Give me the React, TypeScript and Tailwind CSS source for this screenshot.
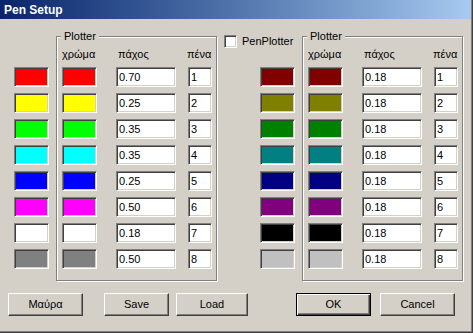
const leftPens = [
  { bg: 'bg-[#ff0000]', w: '0.70' },
  { bg: 'bg-[#ffff00]', w: '0.25' },
  { bg: 'bg-[#00ff00]', w: '0.35' },
  { bg: 'bg-[#00ffff]', w: '0.35' },
  { bg: 'bg-[#0000ff]', w: '0.25' },
  { bg: 'bg-[#ff00ff]', w: '0.50' },
  { bg: 'bg-[#ffffff]', w: '0.18' },
  { bg: 'bg-[#808080]', w: '0.50' },
];

const rightPens = [
  { bg: 'bg-[#800000]', w: '0.18' },
  { bg: 'bg-[#808000]', w: '0.18' },
  { bg: 'bg-[#008000]', w: '0.18' },
  { bg: 'bg-[#008080]', w: '0.18' },
  { bg: 'bg-[#000080]', w: '0.18' },
  { bg: 'bg-[#800080]', w: '0.18' },
  { bg: 'bg-[#000000]', w: '0.18' },
  { bg: 'bg-[#c0c0c0]', w: '0.18' },
];

const sunken =
  'border border-t-[#808080] border-l-[#808080] border-b-white border-r-white shadow-[inset_1px_1px_0_#404040,inset_-1px_-1px_0_#d4d0c8]';

function Swatch({ bg }: { bg: string }) {
  return <div className={`h-[20px] w-[35px] ${sunken} ${bg}`} />;
}

function Field({ value, w }: { value: string; w: string }) {
  return (
    <div className={`flex h-[20px] items-center bg-white pl-[2px] ${w} ${sunken}`}>
      <span className="leading-[13px]">{value}</span>
    </div>
  );
}

function Button({ label, w, isDefault }: { label: string; w: string; isDefault?: boolean }) {
  const frame = isDefault
    ? 'border border-black shadow-[inset_1px_1px_0_#fff,inset_-1px_-1px_0_#404040,inset_-2px_-2px_0_#808080]'
    : 'border border-t-white border-l-white border-b-[#404040] border-r-[#404040] shadow-[inset_-1px_-1px_0_#808080]';
  return (
    <div className={`flex h-[23px] items-center justify-center pb-[1px] ${w} ${frame}`}>
      {label}
    </div>
  );
}

function PenGroup({ pens }: { pens: { bg: string; w: string }[] }) {
  return (
    <div className="relative h-[245px] w-[161px] border border-[#808080] pl-[5px] pt-[11px] shadow-[inset_1px_1px_0_#fff,1px_1px_0_#fff]">
      <span className="absolute -top-[7px] left-[4px] bg-[#d4d0c8] px-[3px] leading-[13px]">
        Plotter
      </span>
      <div className="flex h-[13px] leading-[13px]">
        <span className="w-[35px]">χρώμα</span>
        <span className="ml-[19px] w-[60px] pl-[2px]">πάχος</span>
        <span className="ml-[11px]">πένα</span>
      </div>
      <div className="mt-[6px] flex flex-col gap-[6px]">
        {pens.map((p, i) => (
          <div key={i} className="flex">
            <Swatch bg={p.bg} />
            <div className="ml-[19px]">
              <Field value={p.w} w="w-[60px]" />
            </div>
            <div className="ml-[12px]">
              <Field value={String(i + 1)} w="w-[24px]" />
            </div>
          </div>
        ))}
      </div>
    </div>
  );
}

function SwatchColumn({ pens }: { pens: { bg: string }[] }) {
  return (
    <div className="flex flex-col gap-[6px]">
      {pens.map((p, i) => (
        <Swatch key={i} bg={p.bg} />
      ))}
    </div>
  );
}

export default function App() {
  return (
    <div className="h-[333px] w-[473px] border-b border-r border-[#404040] bg-[#d4d0c8] font-['Liberation_Sans',Arial,sans-serif] text-[11px] text-black">
      <div className="h-full w-full border-b border-r border-[#808080]">
        <div className="flex h-[19px] items-center bg-gradient-to-r from-[#0a246a] to-[#a6caf0] pl-[4px] text-[12px] font-bold text-white">
          Pen Setup
        </div>

        <div className="flex items-start pt-[16px]">
          <div className="ml-[14px] mt-[32px]">
            <SwatchColumn pens={leftPens} />
          </div>
          <div className="ml-[7px] mt-[1px]">
            <PenGroup pens={leftPens} />
          </div>
          <div className="ml-[7px] flex w-[78px] flex-col">
            <div className="flex h-[13px] items-center">
              <div className={`h-[13px] w-[13px] bg-white ${sunken}`} />
              <span className="ml-[5px] leading-[13px]">PenPlotter</span>
            </div>
            <div className="ml-[36px] mt-[19px]">
              <SwatchColumn pens={rightPens} />
            </div>
          </div>
          <div className="mt-[1px]">
            <PenGroup pens={rightPens} />
          </div>
        </div>

        <div className="mt-[12px] flex">
          <div className="ml-[8px]">
            <Button label="Μαύρα" w="w-[75px]" />
          </div>
          <div className="ml-[21px]">
            <Button label="Save" w="w-[65px]" />
          </div>
          <div className="ml-[7px]">
            <Button label="Load" w="w-[72px]" />
          </div>
          <div className="ml-[48px]">
            <Button label="OK" w="w-[75px]" isDefault />
          </div>
          <div className="ml-[9px]">
            <Button label="Cancel" w="w-[75px]" />
          </div>
        </div>
      </div>
    </div>
  );
}
